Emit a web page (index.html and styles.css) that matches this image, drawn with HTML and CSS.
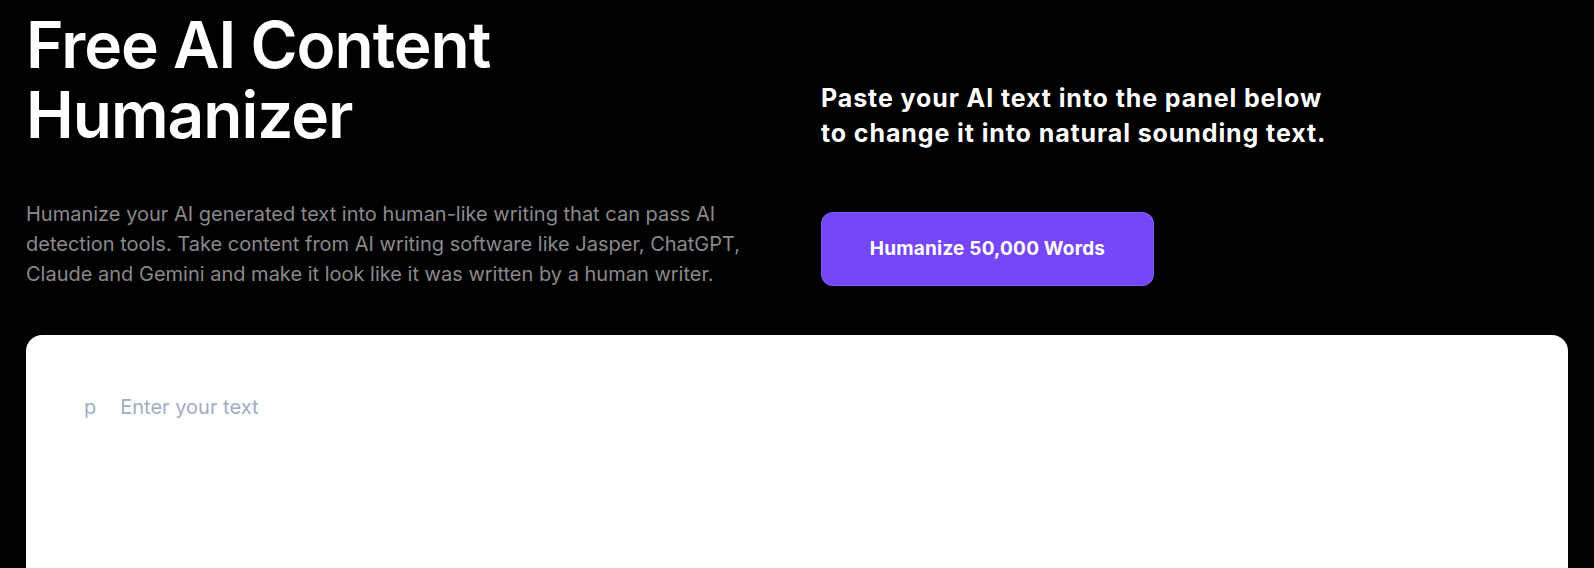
FILE: index.html
```html
<!DOCTYPE html>
<html lang="en">
<head>
<meta charset="utf-8">
<title>Free AI Content Humanizer</title>
<link rel="stylesheet" href="styles.css">
</head>
<body>
<main class="page">
  <section class="hero">
    <div class="hero-left">
      <h1 class="title">Free AI Content Humanizer</h1>
      <p class="lead">Humanize your AI generated text into human-like writing that can pass AI detection tools. Take content from AI writing software like Jasper, ChatGPT, Claude and Gemini and make it look like it was written by a human writer.</p>
    </div>
    <div class="hero-right">
      <h2 class="subtitle">Paste your AI text into the panel below to change it into natural sounding text.</h2>
      <button class="cta" type="button">Humanize 50,000 Words</button>
    </div>
  </section>
  <section class="panel">
    <div class="editor">
      <span class="tag">p</span>
      <span class="placeholder">Enter your text</span>
    </div>
  </section>
</main>
</body>
</html>
```

FILE: styles.css
```css
* { box-sizing: border-box; }

html, body {
  margin: 0;
  padding: 0;
  background: #000;
  height: 100%;
  overflow: hidden;
}

body {
  font-family: Inter, "Noto Sans", "Liberation Sans", sans-serif;
  color: #fff;
}

.page {
  padding: 10px 26px 0;
}

.hero {
  display: grid;
  grid-template-columns: 1fr 1fr;
  column-gap: 48px;
  align-items: end;
}

.title {
  margin: 0;
  font-size: 64px;
  line-height: 1.1;
  font-weight: 600;
  letter-spacing: -1px;
  color: #fff;
}

.lead {
  margin: 48px 0 0;
  font-size: 20px;
  line-height: 30px;
  color: #8a8a8a;
  font-weight: 400;
}

.hero-right {
  display: flex;
  flex-direction: column;
  align-items: flex-start;
}

.subtitle {
  margin: 0 0 61px;
  max-width: 528px;
  font-size: 25px;
  line-height: 35px;
  font-weight: 700;
  letter-spacing: 0.9px;
  color: #fff;
}

.cta {
  width: 333px;
  height: 74px;
  margin-bottom: 3px;
  border: 1px solid rgba(255, 255, 255, 0.12);
  border-radius: 12px;
  background: #7446f7;
  color: #fff;
  font-family: inherit;
  font-size: 19px;
  font-weight: 700;
  letter-spacing: 0.2px;
  cursor: pointer;
}

.panel {
  margin-top: 46px;
  background: #fff;
  border-radius: 16px 16px 0 0;
  height: 400px;
}

.editor {
  display: flex;
  gap: 24px;
  padding: 57px 58px;
  font-size: 20px;
  line-height: 30px;
  color: #a0aec0;
}
```
